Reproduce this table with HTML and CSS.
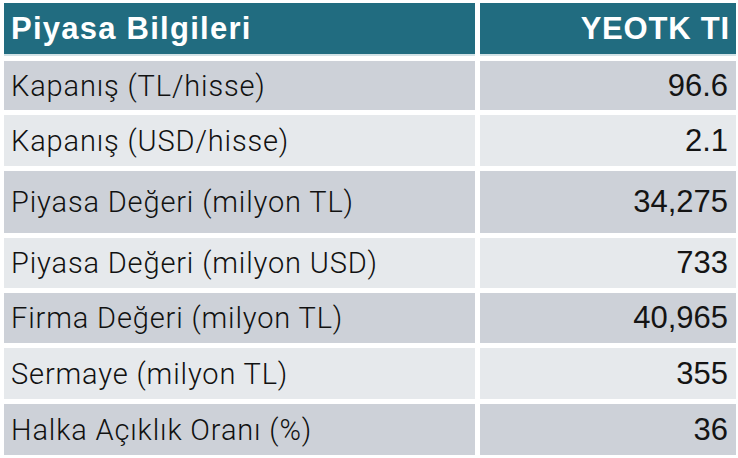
FILE: index.html
```html
<!DOCTYPE html>
<html lang="tr">
<head>
<meta charset="utf-8">
<link rel="stylesheet" href="styles.css">
</head>
<body>
<div class="table">
  <div class="cell head label">Piyasa Bilgileri</div>
  <div class="cell head value">YEOTK TI</div>

  <div class="cell dark label">Kapanış (TL/hisse)</div>
  <div class="cell dark value">96.6</div>

  <div class="cell light label">Kapanış (USD/hisse)</div>
  <div class="cell light value">2.1</div>

  <div class="cell dark label">Piyasa Değeri (milyon TL)</div>
  <div class="cell dark value">34,275</div>

  <div class="cell light label">Piyasa Değeri (milyon USD)</div>
  <div class="cell light value">733</div>

  <div class="cell dark label">Firma Değeri (milyon TL)</div>
  <div class="cell dark value">40,965</div>

  <div class="cell light label">Sermaye (milyon TL)</div>
  <div class="cell light value">355</div>

  <div class="cell dark label">Halka Açıklık Oranı (%)</div>
  <div class="cell dark value">36</div>
</div>
</body>
</html>
```
FILE: styles.css
```css
html, body {
  margin: 0;
  padding: 0;
  background: #ffffff;
}
body {
  padding: 3px 2px 0 4px;
}
.table {
  display: grid;
  grid-template-columns: 471px 256px;
  grid-template-rows: 53px 49px 51px 62px 50px 50px 51px 51px;
  column-gap: 5px;
  row-gap: 5px;
}
.cell {
  display: flex;
  align-items: center;
  padding: 0 8px 0 7px;
  color: #141414;
}
.head {
  height: 51px;
  align-self: start;
  background: #216c80;
  color: #ffffff;
  font-family: "Liberation Sans", Arial, sans-serif;
  font-weight: bold;
  font-size: 31px;
  letter-spacing: 1.2px;
  box-shadow: 0 2px 0 #d2e2e6;
}
.dark {
  background: #cdd1d8;
}
.light {
  background: #e6e9ec;
}
.label {
  font-family: Roboto, sans-serif;
  font-weight: 300;
  font-size: 29px;
  color: #111111;
  letter-spacing: 0.85px;
}
.head.label {
  font-family: "Liberation Sans", Arial, sans-serif;
  font-weight: bold;
  font-size: 31px;
  color: #ffffff;
  letter-spacing: 1.25px;
}
.value {
  justify-content: flex-end;
  font-family: "Liberation Sans", Arial, sans-serif;
  font-size: 31px;
}
.head.value {
  font-size: 31px;
  padding-right: 6px;
  letter-spacing: 0.8px;
}
```
